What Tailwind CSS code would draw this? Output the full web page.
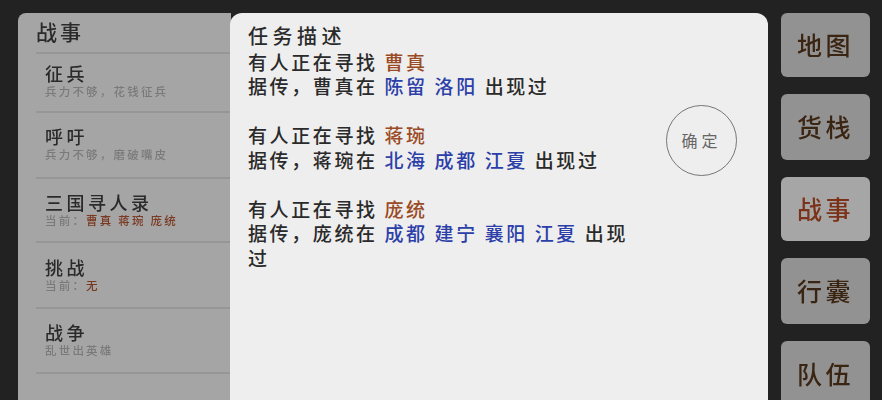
<!DOCTYPE html>
<html lang="zh-CN">
<head>
    <meta charset="UTF-8">
    <title>战事</title>
    <script src="https://cdn.jsdelivr.net/npm/@tailwindcss/browser@4"></script>
</head>
<body class="bg-[#222222] h-[400px] w-[882px] overflow-hidden font-['Noto_Sans_CJK_SC',sans-serif] font-medium text-[#2a2a2a]">
    <div class="flex pt-[13px] pl-[18px] h-[400px] blur-[0.3px] overflow-hidden">

        <!-- left list, sits behind the dialog -->
        <div class="w-[213px] h-[387px] shrink-0 bg-[#a5a5a5] rounded-tl-lg pl-[18px] overflow-hidden">
            <div class="h-[39px] text-[21px] leading-[36px] tracking-[3px]">战事</div>
            <div class="border-t-2 border-[#969696] h-[59px] pl-[9px] pt-[8px]">
                <div class="text-[18px] leading-[22px] tracking-[3.5px]">征兵</div>
                <div class="text-[11.5px] leading-[14px] tracking-[2.2px] text-[#7a7a7a]">兵力不够，花钱征兵</div>
            </div>
            <div class="border-t-2 border-[#969696] h-[66px] pl-[9px] pt-[12px]">
                <div class="text-[18px] leading-[22px] tracking-[3.5px]">呼吁</div>
                <div class="text-[11.5px] leading-[14px] tracking-[2.2px] text-[#7a7a7a]">兵力不够，磨破嘴皮</div>
            </div>
            <div class="border-t-2 border-[#969696] h-[64px] pl-[9px] pt-[12px]">
                <div class="text-[18px] leading-[22px] tracking-[3.5px]">三国寻人录</div>
                <div class="text-[11.5px] leading-[14px] tracking-[2.2px] text-[#7a7a7a]">当前：<span class="text-[#7a3a22]">曹真 蒋琬 庞统</span></div>
            </div>
            <div class="border-t-2 border-[#969696] h-[66px] pl-[9px] pt-[13px]">
                <div class="text-[18px] leading-[22px] tracking-[3.5px]">挑战</div>
                <div class="text-[11.5px] leading-[14px] tracking-[2.2px] text-[#7a7a7a]">当前：<span class="text-[#7a3a22]">无</span></div>
            </div>
            <div class="border-t-2 border-[#969696] h-[65px] pl-[9px] pt-[12px]">
                <div class="text-[18px] leading-[22px] tracking-[3.5px]">战争</div>
                <div class="text-[11.5px] leading-[14px] tracking-[2.2px] text-[#7a7a7a]">乱世出英雄</div>
            </div>
            <div class="border-t-2 border-[#969696]"></div>
        </div>

        <!-- task dialog -->
        <div class="relative w-[538px] h-[387px] shrink-0 -ml-px bg-[#eeeeee] rounded-t-xl pl-[18px] pt-[11px] text-[19px] tracking-[2.6px] leading-[24.5px]">
            <div class="mb-[1px] text-[20px] tracking-[4.5px]">任务描述</div>
            <div class="w-[385px]">
                <p>有人正在寻找 <span class="text-[#9a4a24]">曹真</span></p>
                <p>据传，曹真在 <span class="text-[#2c3fa8]">陈留 洛阳</span> 出现过</p>
                <p class="mt-[24.5px]">有人正在寻找 <span class="text-[#9a4a24]">蒋琬</span></p>
                <p>据传，蒋琬在 <span class="text-[#2c3fa8]">北海 成都 江夏</span> 出现过</p>
                <p class="mt-[24.5px]">有人正在寻找 <span class="text-[#9a4a24]">庞统</span></p>
                <p>据传，庞统在 <span class="text-[#2c3fa8]">成都 建宁 襄阳 江夏</span> 出现过</p>
            </div>
            <button class="absolute left-[436px] top-[92px] w-[71px] h-[71px] rounded-full border border-[#777777] text-[16px] font-normal tracking-[4px] text-[#666666]">确定</button>
        </div>

        <!-- side tabs -->
        <div class="flex flex-col gap-[17px] ml-[13px] w-[89px] h-[387px] shrink-0 overflow-hidden">
            <div class="h-[64px] shrink-0 rounded-md bg-[#929292] flex items-center justify-center text-[25px] tracking-[3.5px] text-[#3a2412]">地图</div>
            <div class="h-[66px] shrink-0 rounded-md bg-[#929292] flex items-center justify-center text-[25px] tracking-[3.5px] text-[#3a2412]">货栈</div>
            <div class="h-[64px] shrink-0 rounded-md bg-[#a6a6a6] flex items-center justify-center text-[25px] tracking-[3.5px] text-[#7c3218]">战事</div>
            <div class="h-[66px] shrink-0 rounded-md bg-[#929292] flex items-center justify-center text-[25px] tracking-[3.5px] text-[#3a2412]">行囊</div>
            <div class="h-[66px] shrink-0 rounded-md bg-[#929292] flex items-center justify-center text-[25px] tracking-[3.5px] text-[#3a2412]">队伍</div>
        </div>
    </div>
</body>
</html>
